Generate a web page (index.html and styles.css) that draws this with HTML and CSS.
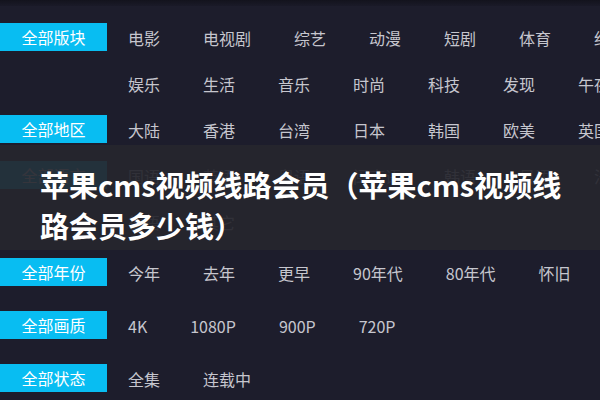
FILE: index.html
```html
<!DOCTYPE html>
<html lang="zh-CN">
<head>
<meta charset="utf-8">
<title>苹果cms视频线路会员</title>
<link rel="stylesheet" href="styles.css">
</head>
<body>
<div class="topbar"></div>
<div class="page">
  <div class="group">
    <div class="label">全部版块</div>
    <ul class="items">
      <li>电影</li><li>电视剧</li><li>综艺</li><li>动漫</li><li>短剧</li><li>体育</li><li>纪录片</li>
      <li>娱乐</li><li>生活</li><li>音乐</li><li>时尚</li><li>科技</li><li>发现</li><li>午夜</li>
    </ul>
  </div>
  <div class="group">
    <div class="label">全部地区</div>
    <ul class="items">
      <li>大陆</li><li>香港</li><li>台湾</li><li>日本</li><li>韩国</li><li>欧美</li><li>英国</li><li>其他</li>
    </ul>
  </div>
  <div class="group">
    <div class="label">全部语言</div>
    <ul class="items">
      <li>国语</li><li>英语</li><li>粤语</li><li>闽南语</li><li>韩语</li><li>日语</li><li>法语</li>
      <li>德语</li><li>其它</li>
    </ul>
  </div>
  <div class="group group--tall">
    <div class="label">全部年份</div>
    <ul class="items">
      <li>今年</li><li>去年</li><li>更早</li><li>90年代</li><li>80年代</li><li>怀旧</li>
    </ul>
  </div>
  <div class="group group--tall">
    <div class="label">全部画质</div>
    <ul class="items">
      <li>4K</li><li>1080P</li><li>900P</li><li>720P</li>
    </ul>
  </div>
  <div class="group group--tall">
    <div class="label">全部状态</div>
    <ul class="items">
      <li>全集</li><li>连载中</li>
    </ul>
  </div>
</div>
<div class="overlay">
  <h1 class="title">苹果cms视频线路会员（苹果cms视频线路会员多少钱）</h1>
</div>
</body>
</html>
```
FILE: styles.css
```css
html, body {
  margin: 0;
  padding: 0;
  overflow: hidden;
  width: 600px;
  height: 400px;
}
body {
  background: #1d1d2c;
  font-family: "Microsoft YaHei", "Noto Sans CJK SC", "Noto Sans", sans-serif;
  position: relative;
}
.topbar {
  height: 6px;
  background: linear-gradient(#13131d, #1a1a28);
}
.page {
  width: 690px;
  padding-top: 9px;
}
.group {
  display: flex;
  align-items: flex-start;
}
.label {
  flex: 0 0 107px;
  height: 28px;
  margin-top: 8px;
  background: #08bdf2;
  color: #ffffff;
  font-size: 16px;
  line-height: 28px;
  text-align: center;
}
.items {
  list-style: none;
  margin: 0 0 0 21px;
  padding: 0;
  flex: 1;
  display: flex;
  flex-wrap: wrap;
  column-gap: 43px;
}
.items li {
  height: 46px;
  line-height: 46px;
  font-size: 16px;
  color: #c6c6ce;
  white-space: nowrap;
}
.group--tall {
  margin-top: 3px;
}
.group--tall .label {
  margin-top: 10px;
}
.group--tall .items li {
  height: 50px;
  line-height: 50px;
}
.overlay {
  position: absolute;
  left: 0;
  right: 0;
  top: 145px;
  height: 105px;
  background: rgba(38, 38, 45, 0.93);
}
.title {
  margin: 0;
  padding: 19px 36px 0 40px;
  font-size: 29px;
  line-height: 41px;
  font-weight: 700;
  color: #ffffff;
  font-family: "Noto Sans CJK SC", "Noto Sans", sans-serif;
}
```
